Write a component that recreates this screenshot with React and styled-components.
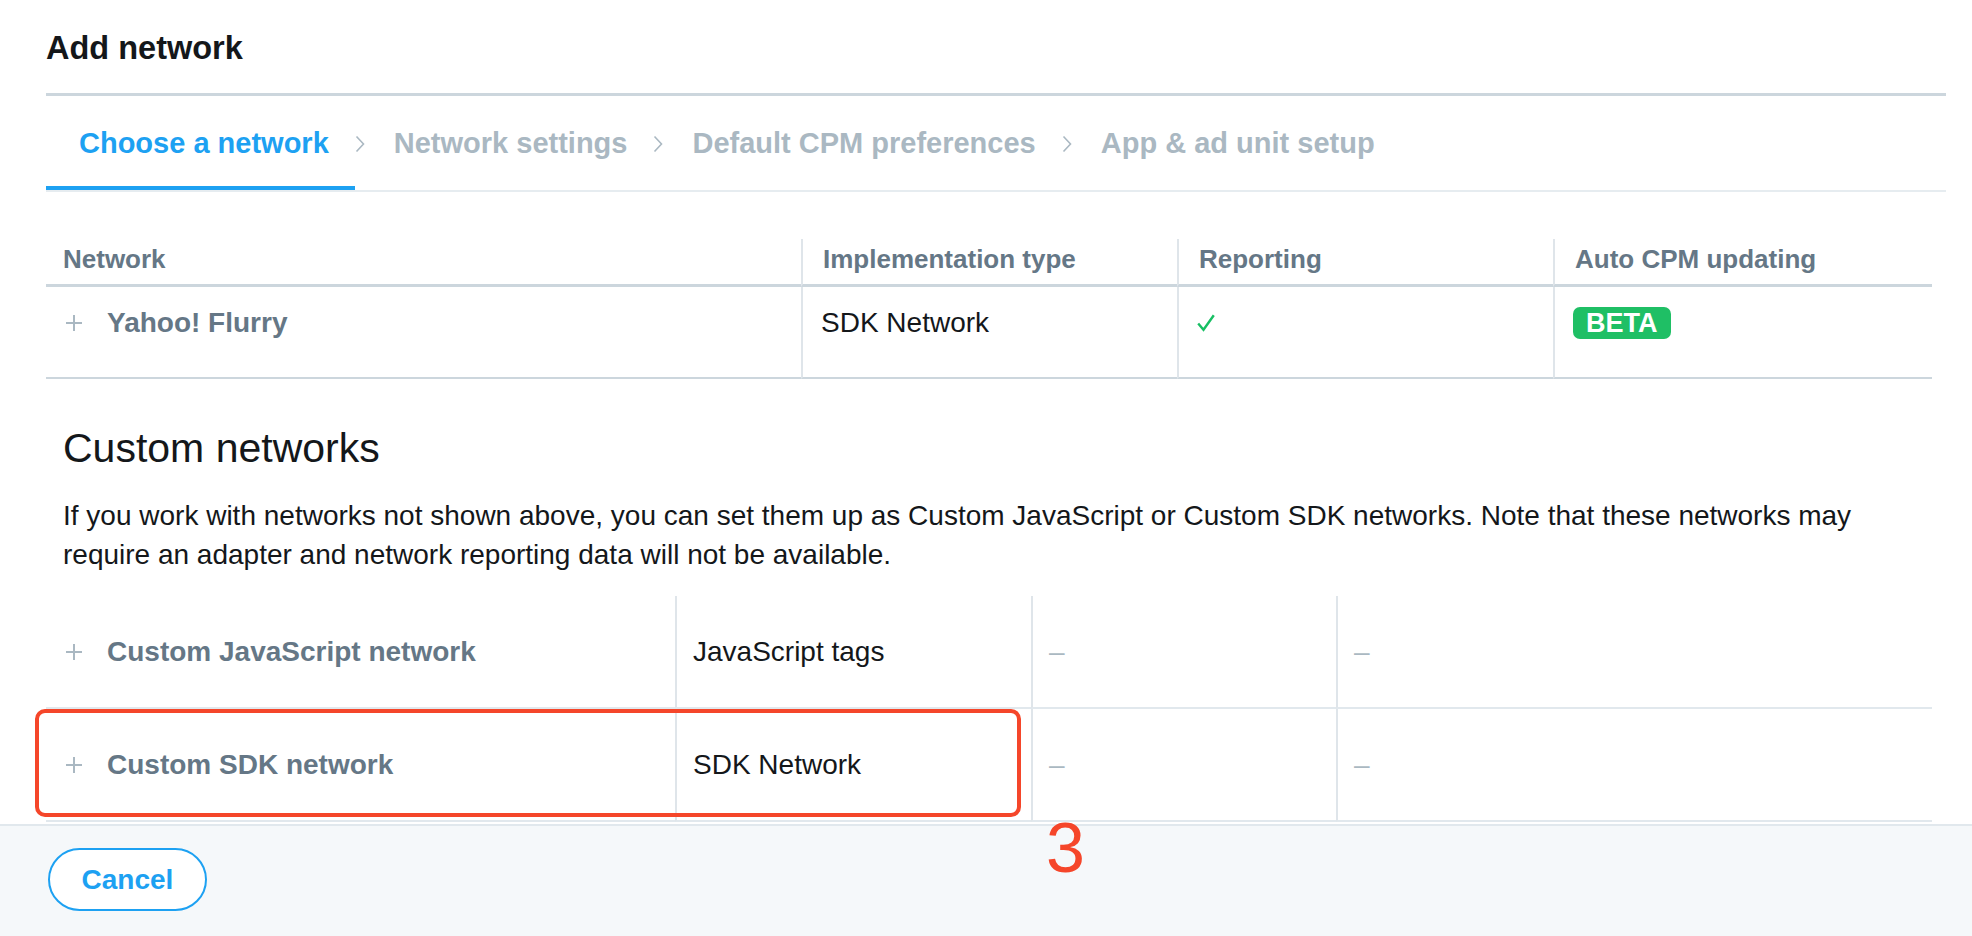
import React from "react";
import styled, { createGlobalStyle } from "styled-components";

const GlobalStyle = createGlobalStyle`
  body {
    margin: 0;
    background: #ffffff;
    font-family: "Liberation Sans", Arial, sans-serif;
    color: #14171a;
  }
`;

const steps = [
  "Choose a network",
  "Network settings",
  "Default CPM preferences",
  "App & ad unit setup",
];

const PlusIcon = () => (
  <svg width="18" height="18" viewBox="0 0 18 18">
    <path d="M9 1v16M1 9h16" stroke="#aab8c2" strokeWidth="2" fill="none" />
  </svg>
);

const ChevronIcon = () => (
  <svg width="10" height="18" viewBox="0 0 10 18">
    <path d="M1.5 1.5L8.5 9L1.5 16.5" stroke="#aab8c2" strokeWidth="1.6" fill="none" />
  </svg>
);

const CheckIcon = () => (
  <svg width="18" height="18" viewBox="0 0 18 18">
    <path d="M1.2 9.5L6.5 15.8L16.8 1.2" stroke="#17bf63" strokeWidth="2.4" fill="none" />
  </svg>
);

const App = () => {
  return (
    <Page>
      <GlobalStyle />
      <Content>
        <Title>Add network</Title>
        <Divider />

        <Steps>
          {steps.map((s, i) => (
            <React.Fragment key={s}>
              {i > 0 && (
                <StepArrow>
                  <ChevronIcon />
                </StepArrow>
              )}
              <Step $active={i === 0} $first={i === 0}>
                {s}
              </Step>
            </React.Fragment>
          ))}
        </Steps>

        <Table $cols="755px 376px 376px 1fr" $gap="47px">
          <HeadCell $first>Network</HeadCell>
          <HeadCell>Implementation type</HeadCell>
          <HeadCell>Reporting</HeadCell>
          <HeadCell>Auto CPM updating</HeadCell>

          <BodyCell $first>
            <NetworkName>
              <PlusIcon />
              Yahoo! Flurry
            </NetworkName>
          </BodyCell>
          <BodyCell>SDK Network</BodyCell>
          <BodyCell>
            <CheckIcon />
          </BodyCell>
          <BodyCell>
            <Badge>BETA</Badge>
          </BodyCell>
        </Table>

        <SectionTitle>Custom networks</SectionTitle>
        <Intro>
          If you work with networks not shown above, you can set them up as
          Custom JavaScript or Custom SDK networks. Note that these networks may
          require an adapter and network reporting data will not be available.
        </Intro>

        <Table $cols="629px 356px 305px 1fr" $gap="22px">
          <CustomCell $first>
            <NetworkName>
              <PlusIcon />
              Custom JavaScript network
            </NetworkName>
          </CustomCell>
          <CustomCell>JavaScript tags</CustomCell>
          <CustomCell>
            <Dash>–</Dash>
          </CustomCell>
          <CustomCell>
            <Dash>–</Dash>
          </CustomCell>

          <CustomCell $first>
            <NetworkName>
              <PlusIcon />
              Custom SDK network
            </NetworkName>
          </CustomCell>
          <CustomCell>SDK Network</CustomCell>
          <CustomCell>
            <Dash>–</Dash>
          </CustomCell>
          <CustomCell>
            <Dash>–</Dash>
          </CustomCell>
        </Table>
      </Content>

      <Footer>
        <CancelButton type="button">Cancel</CancelButton>
      </Footer>

      <Highlight />
      <StepNumber>3</StepNumber>
    </Page>
  );
};

export default App;

const Page = styled.div`
  position: relative;
  width: 1972px;
  min-height: 936px;
  overflow: hidden;
  background: #ffffff;
`;

const Content = styled.div`
  padding: 0 26px 0 46px;
`;

const Title = styled.h1`
  margin: 28px 0 0;
  font-size: 32.5px;
  line-height: 40px;
  font-weight: 700;
  color: #14171a;
`;

const Divider = styled.div`
  margin-top: 25px;
  height: 3px;
  background: #ccd6dd;
`;

const Steps = styled.nav`
  display: flex;
  align-items: stretch;
  height: 94px;
  border-bottom: 2px solid #e6ecf0;
`;

const Step = styled.div`
  display: flex;
  align-items: center;
  box-sizing: border-box;
  padding: 4px 26px 0 ${(p) => (p.$first ? "33px" : "29px")};
  border-bottom: 4px solid ${(p) => (p.$active ? "#1da1f2" : "transparent")};
  font-size: 29px;
  font-weight: 700;
  color: ${(p) => (p.$active ? "#1da1f2" : "#aab8c2")};
  white-space: nowrap;
`;

const StepArrow = styled.span`
  display: flex;
  align-items: center;
  padding-top: 2px;
`;

const Table = styled.div`
  display: grid;
  grid-template-columns: ${(p) => p.$cols};
  width: 1886px;
  margin-top: ${(p) => p.$gap};
`;

const HeadCell = styled.div`
  padding: 0 18px 5px ${(p) => (p.$first ? "17px" : "20px")};
  font-size: 26px;
  line-height: 40px;
  font-weight: 700;
  color: #657786;
  border-bottom: 3px solid #ccd6dd;
  border-left: ${(p) => (p.$first ? "none" : "2px solid #dfe5ea")};
  white-space: nowrap;
`;

const BodyCell = styled.div`
  display: flex;
  align-items: center;
  height: 40px;
  padding: 16px 18px 34px ${(p) => (p.$first ? "19px" : "18px")};
  font-size: 28px;
  color: #14171a;
  border-bottom: 2px solid #ccd6dd;
  border-left: ${(p) => (p.$first ? "none" : "2px solid #dfe5ea")};
`;

const CustomCell = styled.div`
  display: flex;
  align-items: center;
  height: 40px;
  padding: 36px 18px 35px ${(p) => (p.$first ? "19px" : "16px")};
  font-size: 28px;
  color: #14171a;
  border-bottom: 2px solid #e1e8ed;
  border-left: ${(p) => (p.$first ? "none" : "2px solid #dfe5ea")};
`;

const NetworkName = styled.div`
  display: flex;
  align-items: center;
  gap: 24px;
  font-weight: 700;
  color: #657786;
  white-space: nowrap;
`;

const Badge = styled.span`
  display: inline-block;
  height: 32px;
  padding: 0 13px;
  border-radius: 7px;
  background: #1fbf65;
  color: #ffffff;
  font-size: 27px;
  line-height: 33px;
  font-weight: 700;
`;

const Dash = styled.span`
  color: #aab8c2;
`;

const SectionTitle = styled.h2`
  margin: 44px 0 0;
  padding-left: 17px;
  font-size: 41px;
  line-height: 50px;
  font-weight: 400;
  color: #14171a;
`;

const Intro = styled.p`
  margin: 23px 0 0;
  padding-left: 17px;
  width: 1869px;
  box-sizing: border-box;
  font-size: 28px;
  line-height: 39px;
  color: #14171a;
`;

const Footer = styled.div`
  margin-top: 2px;
  height: 112px;
  box-sizing: border-box;
  padding: 22px 0 0 48px;
  background: #f5f8fa;
  border-top: 2px solid #e1e8ed;
`;

const CancelButton = styled.button`
  width: 159px;
  height: 63px;
  border: 2px solid #1da1f2;
  border-radius: 32px;
  background: #ffffff;
  color: #1da1f2;
  font-family: "Liberation Sans", Arial, sans-serif;
  font-size: 28px;
  font-weight: 700;
  cursor: pointer;
`;

const Highlight = styled.div`
  position: absolute;
  left: 35px;
  top: 709px;
  width: 986px;
  height: 108px;
  box-sizing: border-box;
  border: 4px solid #f5462a;
  border-radius: 10px;
  pointer-events: none;
`;

const StepNumber = styled.div`
  position: absolute;
  left: 1046px;
  top: 813px;
  font-size: 70px;
  line-height: 1;
  font-weight: 300;
  color: #f5462a;
`;
